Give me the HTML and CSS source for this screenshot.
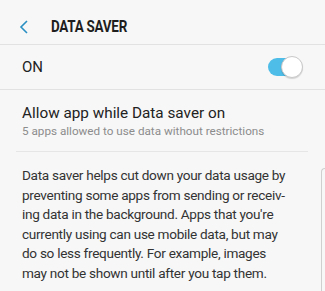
FILE: index.html
```html
<!DOCTYPE html>
<html lang="en">
<head>
  <meta charset="UTF-8" />
  <meta name="viewport" content="width=device-width, initial-scale=1.0"/>
  <title>Data saver</title>
  <link rel="stylesheet" href="styles.css">
</head>
<body>

  <header class="top-bar">
    <span class="back">
      <svg width="10" height="14" viewBox="0 0 10 14">
        <path d="M8 1 L2 7 L8 13" fill="none" stroke="#2a8fc2" stroke-width="1.6"/>
      </svg>
    </span>
    <h1 class="title">DATA SAVER</h1>
  </header>

  <!-- main switch -->
  <div class="switch-row">
    <span class="switch-label">ON</span>
    <span class="toggle"><span class="knob"></span></span>
  </div>

  <div class="item">
    <div class="item-title">Allow app while Data saver on</div>
    <div class="item-sub">5 apps allowed to use data without restrictions</div>
  </div>

  <p class="info">Data saver helps cut down your data usage by<br>preventing some apps from sending or receiv-<br>ing data in the background. Apps that you're<br>currently using can use mobile data, but may<br>do so less frequently. For example, images<br>may not be shown until after you tap them.</p>

  <div class="edge"></div>

</body>
</html>
```

FILE: styles.css
```css
body {
  margin: 0;
  width: 325px;
  height: 291px;
  overflow: hidden;
  background-color: #f7f7f7;
  font-family: Roboto, "Noto Sans", sans-serif;
  color: #222;
  position: relative;
}

.top-bar {
  height: 45px;
  box-sizing: border-box;
  padding-top: 9px;
  display: flex;
  align-items: center;
  border-bottom: 1px solid #e2e2e2;
}

.back {
  width: 51px;
  padding-left: 19px;
  box-sizing: border-box;
  display: flex;
  align-items: center;
}

.title {
  margin: 0;
  font-size: 16px;
  font-weight: 700;
  color: #1e1e1e;
  letter-spacing: -0.3px;
  transform: scaleX(0.84);
  transform-origin: left center;
}

.switch-row {
  height: 44px;
  display: flex;
  align-items: center;
  justify-content: space-between;
  padding: 0 23px 0 22px;
  border-bottom: 1px solid #e2e2e2;
}

.switch-label {
  font-size: 15px;
}

.toggle {
  position: relative;
  width: 34px;
  height: 18px;
  border-radius: 9px;
  background-color: #4ebde7;
}

.knob {
  position: absolute;
  right: -1px;
  top: -2px;
  width: 20px;
  height: 20px;
  border-radius: 50%;
  background-color: #fff;
  border: 1px solid #c9c9c9;
  box-shadow: 0 1px 1px rgba(0, 0, 0, 0.15);
}

.item {
  margin: 0 17px 0 16px;
  padding: 13px 0 11px 6px;
  border-bottom: 1px solid #e6e6e6;
}

.item-title {
  font-size: 15.3px;
  line-height: 20px;
}

.item-sub {
  font-size: 11.7px;
  color: #8c8c8c;
  line-height: 17px;
}

.info {
  margin: 0;
  padding: 14px 0 0 22px;
  font-size: 13.6px;
  letter-spacing: -0.3px;
  line-height: 19.5px;
  color: #333;
  white-space: nowrap;
}

.edge {
  position: absolute;
  left: 321px;
  top: 168px;
  width: 3px;
  height: 122px;
  border-left: 1px solid #cfcfcf;
  border-top: 1px solid #cfcfcf;
  border-top-left-radius: 8px;
}
```
